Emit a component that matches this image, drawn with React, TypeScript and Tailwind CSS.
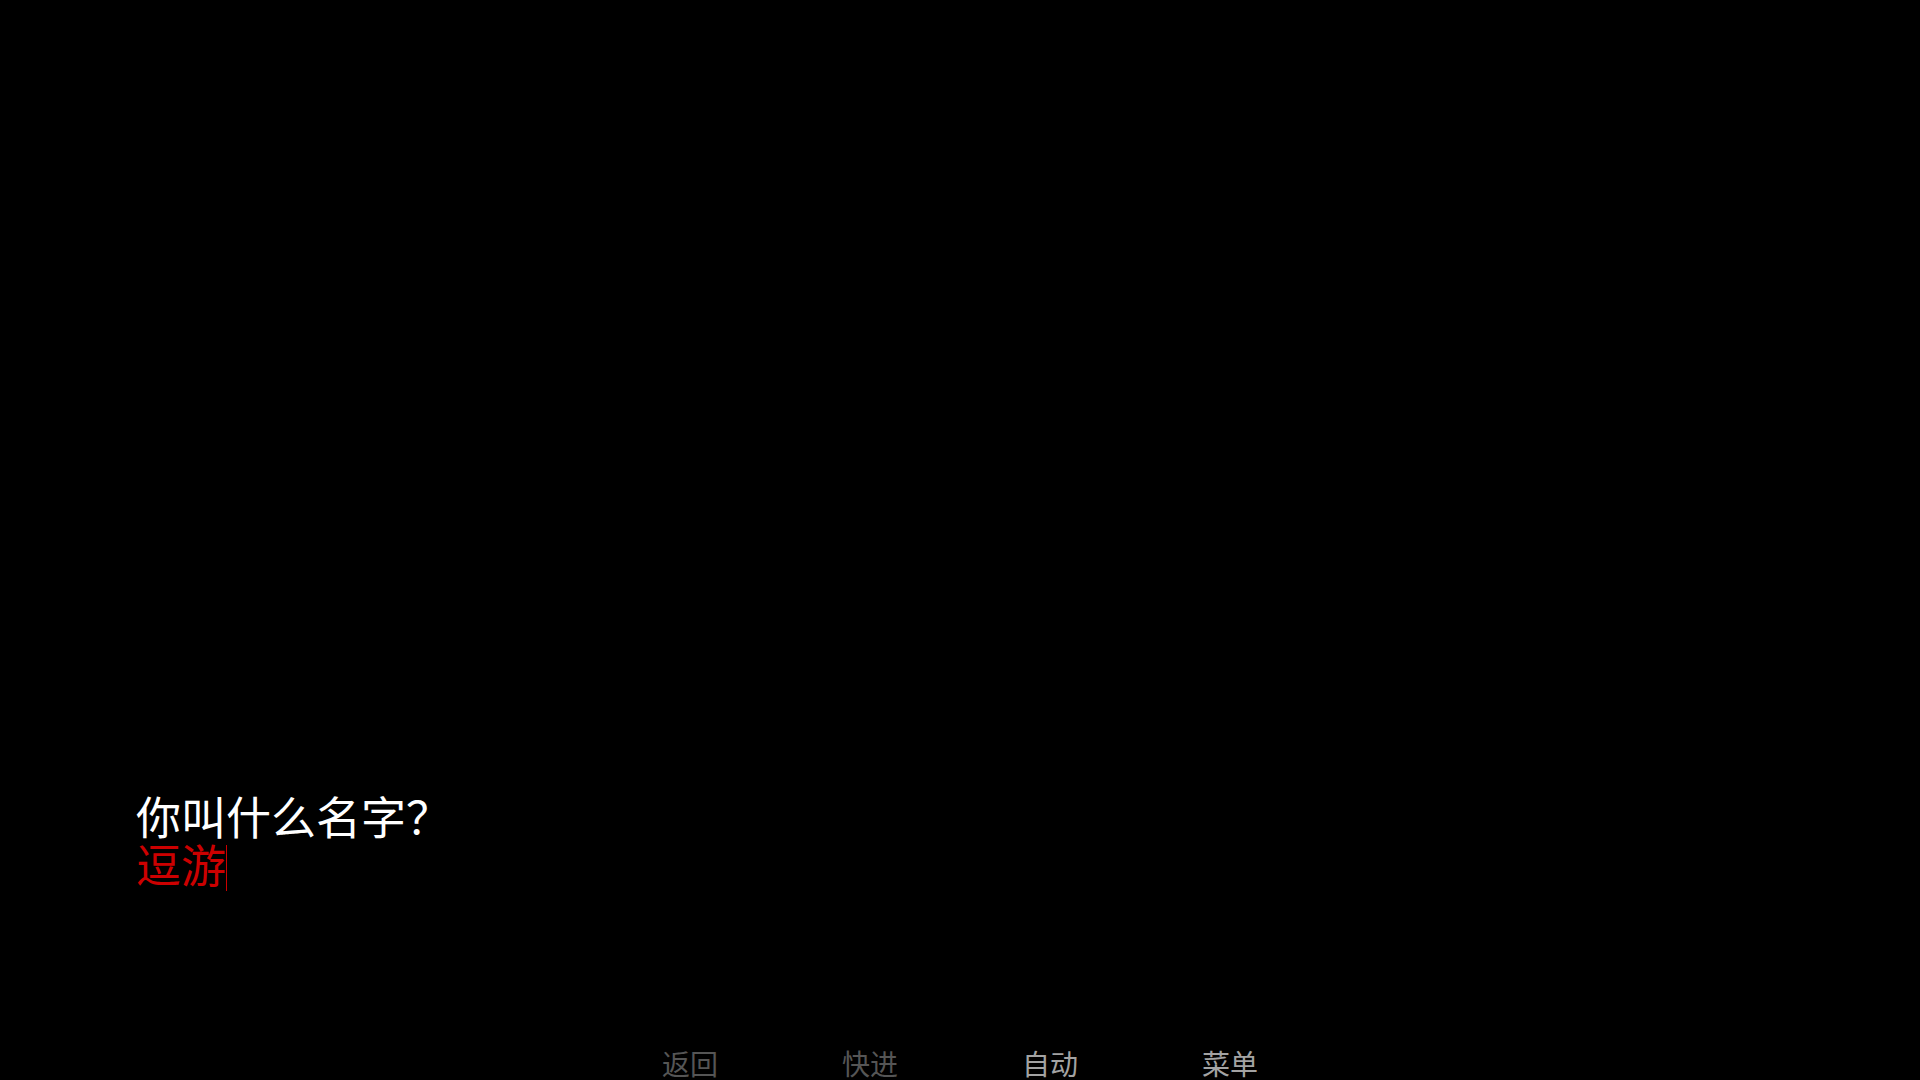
const font = "font-['Noto_Sans_CJK_SC','Noto_Sans',sans-serif]";

const menu = [
  { label: "返回", dim: true },
  { label: "快进", dim: true },
  { label: "自动", dim: false },
  { label: "菜单", dim: false },
];

export default function App() {
  return (
    <div className={`h-[1080px] w-full overflow-hidden bg-black ${font}`}>
      <div className="flex flex-col pt-[792px]">
        {/* dialogue */}
        <div className="pl-[136px] text-[45px] leading-[48px]">
          <p className="text-white">你叫什么名字？</p>
          <p className="text-[#cc0000]">
            逗游
            <span className="inline-block h-[46px] w-px bg-[#cc0000] align-[-8px]" />
          </p>
        </div>

        {/* quick menu */}
        <div className="mt-[158px] flex justify-center">
          {menu.map((m) => (
            <span
              key={m.label}
              className={`w-[180px] text-center text-[28px] leading-[28px] ${
                m.dim ? "text-[#555555]" : "text-[#a3a3a3]"
              }`}
            >
              {m.label}
            </span>
          ))}
        </div>
      </div>
    </div>
  );
}
